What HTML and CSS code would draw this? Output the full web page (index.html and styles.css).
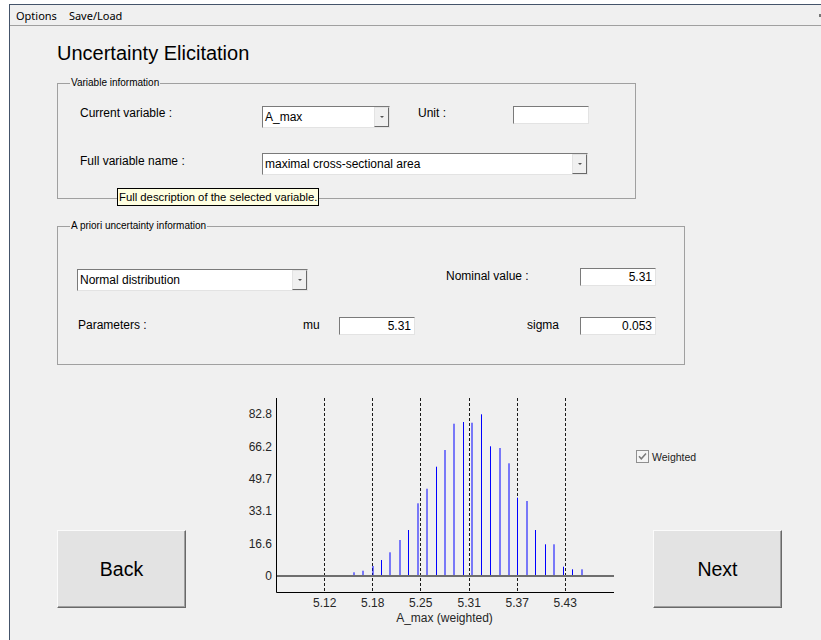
FILE: index.html
```html
<!DOCTYPE html>
<html lang="en">
<head>
<meta charset="utf-8">
<title>Uncertainty Elicitation</title>
<link rel="stylesheet" href="styles.css">
</head>
<body>
<div class="window">
  <div class="menubar">
    <span class="menu-item">Options</span>
    <span class="menu-item">Save/Load</span>
    <span class="menu-grip"></span>
  </div>

  <div class="content">
    <h1 class="title">Uncertainty Elicitation</h1>

    <fieldset class="panel panel-var">
      <legend>Variable information</legend>
      <div class="row">
        <span class="label w-182">Current variable :</span>
        <div class="combo combo-var"><span class="combo-text">A_max</span><span class="combo-btn"></span></div>
        <span class="label lbl-unit">Unit :</span>
        <div class="field field-unit"></div>
      </div>
      <div class="row row-full">
        <span class="label w-182 lbl-full">Full variable name :</span>
        <div class="combo combo-full"><span class="combo-text">maximal cross-sectional area</span><span class="combo-btn"></span></div>
      </div>
    </fieldset>

    <fieldset class="panel panel-prior">
      <legend>A priori uncertainty information</legend>
      <div class="row row-dist">
        <div class="combo combo-dist"><span class="combo-text">Normal distribution</span><span class="combo-btn"></span></div>
        <span class="label lbl-nominal">Nominal value :</span>
        <div class="field">5.31</div>
      </div>
      <div class="row row-params">
        <span class="label lbl-params">Parameters :</span>
        <span class="label lbl-mu">mu</span>
        <div class="field">5.31</div>
        <span class="label lbl-sigma">sigma</span>
        <div class="field">0.053</div>
      </div>
    </fieldset>

    <div class="lower">
      <button class="btn btn-back" type="button">Back</button>

      <svg class="plot" width="390" height="240" viewBox="0 0 390 240">
        <g stroke="#1a1a1a" stroke-width="1" stroke-dasharray="3 2">
          <line x1="88.5" y1="8" x2="88.5" y2="202"/>
          <line x1="136.5" y1="8" x2="136.5" y2="202"/>
          <line x1="184.5" y1="8" x2="184.5" y2="202"/>
          <line x1="233.5" y1="8" x2="233.5" y2="202"/>
          <line x1="281.5" y1="8" x2="281.5" y2="202"/>
          <line x1="329.5" y1="8" x2="329.5" y2="202"/>
        </g>
        <!-- weighted sample stems, drawn as 1px columns from the top down to zero -->
        <g fill="#0000ff">
          <rect x="117.5" y="182.3" width="1" height="3.7"/>
          <rect x="126.5" y="180.7" width="1" height="5.3"/>
          <rect x="136.5" y="176" width="1" height="10"/>
          <rect x="145" y="170" width="1" height="16"/>
          <rect x="153.5" y="162.3" width="1" height="23.7"/>
          <rect x="163.5" y="150" width="1" height="36"/>
          <rect x="172" y="140" width="1" height="46"/>
          <rect x="181.5" y="113.3" width="1" height="72.7"/>
          <rect x="190.5" y="98.7" width="1" height="87.3"/>
          <rect x="200" y="76.7" width="1" height="109.3"/>
          <rect x="208.5" y="60" width="1" height="126"/>
          <rect x="217.5" y="33.7" width="1" height="152.3"/>
          <rect x="227" y="32" width="1" height="154"/>
          <rect x="235.5" y="32.7" width="1" height="153.3"/>
          <rect x="245" y="24.3" width="1" height="161.7"/>
          <rect x="254" y="56.3" width="1" height="129.7"/>
          <rect x="263.5" y="58" width="1" height="128"/>
          <rect x="272.5" y="73.3" width="1" height="112.7"/>
          <rect x="281" y="107.7" width="1" height="78.3"/>
          <rect x="290.5" y="111" width="1" height="75"/>
          <rect x="299" y="140" width="1" height="46"/>
          <rect x="309" y="154.3" width="1" height="31.7"/>
          <rect x="317.5" y="154.3" width="1" height="31.7"/>
          <rect x="327" y="176.7" width="1" height="9.3"/>
          <rect x="336" y="179.3" width="1" height="6.7"/>
          <rect x="345.5" y="179.3" width="1" height="6.7"/>
        </g>
        <!-- baseline at zero -->
        <line x1="40" y1="186" x2="378" y2="186" stroke="#6e6e6e" stroke-width="2"/>
        <!-- axes -->
        <path d="M40.5 8 V202.5 H378" fill="none" stroke="#000" stroke-width="1"/>
        <g class="tick" text-anchor="end">
          <text x="36" y="28.3">82.8</text>
          <text x="36" y="61">66.2</text>
          <text x="36" y="93.3">49.7</text>
          <text x="36" y="125.3">33.1</text>
          <text x="36" y="157.6">16.6</text>
          <text x="36" y="190">0</text>
        </g>
        <g class="tick" text-anchor="middle">
          <text x="88.7" y="217.3">5.12</text>
          <text x="136.7" y="217.3">5.18</text>
          <text x="184.7" y="217.3">5.25</text>
          <text x="233.3" y="217.3">5.31</text>
          <text x="281.3" y="217.3">5.37</text>
          <text x="329.3" y="217.3">5.43</text>
          <text x="208.5" y="232.3">A_max (weighted)</text>
        </g>
      </svg>

      <div class="side">
        <label class="check">
          <svg class="check-box" width="13" height="13" viewBox="0 0 13 13">
            <rect x="0.5" y="0.5" width="12" height="12" fill="#f5f5f5" stroke="#8f8f8f"/>
            <path d="M3 6.3 L5.3 8.8 L10 3.6" fill="none" stroke="#7a7a7a" stroke-width="1.5"/>
          </svg>
          <span>Weighted</span>
        </label>
        <button class="btn btn-next" type="button">Next</button>
      </div>
    </div>
  </div>

  <div class="tooltip">Full description of the selected variable.</div>
</div>
</body>
</html>
```

FILE: styles.css
```css
html, body {
  margin: 0;
  padding: 0;
  background: #ffffff;
  overflow: hidden;
}

.window {
  position: relative;
  margin: 4px 0 0 9px;
  height: 636px;
  box-sizing: border-box;
  border-left: 1px solid #44546a;
  border-top: 1px solid #44546a;
  background: #f0f0f0;
  font-family: "Liberation Sans", Arial, sans-serif;
  color: #000;
}

/* menu bar */
.menubar {
  display: flex;
  align-items: center;
  gap: 12px;
  height: 20px;
  padding-left: 6px;
  border-bottom: 1px solid #a0a0a0;
  background: #f0f0f0;
  font-family: "Noto Sans", "Liberation Sans", sans-serif;
  font-size: 11px;
  color: #000;
}

.menu-grip {
  margin-left: auto;
  width: 2px;
  height: 3px;
  background: #777;
}

/* main area */
.content {
  padding-left: 47px;
}

.title {
  margin: 16px 0 0 0;
  font-size: 20px;
  line-height: 23px;
  font-weight: normal;
}

.panel {
  box-sizing: border-box;
  margin: 0;
  padding: 17px 0 23px 0;
  border: 1px solid #a0a0a0;
  min-width: 0;
}

.panel legend {
  margin-left: 12px;
  padding: 0 1px;
  font-size: 10px;
  line-height: 12px;
  color: #000;
}

.panel-var {
  width: 579px;
  margin-top: 12px;
}

.panel-prior {
  width: 628px;
  margin-top: 21px;
  padding: 36px 0 29px 0;
}

.row {
  display: flex;
  align-items: flex-start;
  padding-left: 22px;
}

.row-full {
  margin-top: 25px;
}

.label {
  font-size: 12px;
  line-height: 14px;
  white-space: nowrap;
}

.w-182 { width: 182px; flex: none; }
.lbl-full { margin-top: 1px; }

.lbl-unit {
  margin-left: 28px;
  width: 95px;
}

/* combo boxes */
.combo {
  box-sizing: border-box;
  display: flex;
  height: 22px;
  border: 1px solid;
  border-color: #7a7a7a #e3e3e3 #e3e3e3 #7a7a7a;
  background: #fff;
  flex: none;
}

.combo-text {
  flex: 1;
  padding-left: 2px;
  font-size: 12px;
  line-height: 20px;
  white-space: nowrap;
  overflow: hidden;
}

.combo-btn {
  box-sizing: border-box;
  width: 15px;
  height: 20px;
  display: flex;
  align-items: center;
  justify-content: center;
  background: #f0f0f0;
  border: 1px solid;
  border-color: #e3e3e3 #696969 #696969 #e3e3e3;
}

.combo-btn::after {
  content: "";
  border-left: 2px solid transparent;
  border-right: 2px solid transparent;
  border-top: 2px solid #555;
}

.combo-var { width: 128px; }
.combo-full { width: 326px; }
.combo-dist { width: 231px; margin-top: 1px; }

/* edit fields */
.field {
  box-sizing: border-box;
  width: 76px;
  height: 18px;
  padding-right: 3px;
  border: 1px solid;
  border-color: #7a7a7a #e3e3e3 #e3e3e3 #7a7a7a;
  background: #fff;
  font-size: 12px;
  line-height: 16px;
  text-align: right;
  flex: none;
}

/* a priori panel rows */
.row-dist,
.row-params {
  padding-left: 19px;
}

.row-params {
  margin-top: 26px;
}

.lbl-nominal {
  margin: 1px 0 0 138px;
  width: 134px;
}

.lbl-params {
  margin: 1px 0 0 1px;
  width: 225px;
}

.lbl-mu {
  margin-top: 1px;
  width: 36px;
}

.lbl-sigma {
  margin: 1px 0 0 112px;
  width: 53px;
}

/* lower area: buttons and plot */
.lower {
  display: flex;
  align-items: flex-start;
  margin-top: 25px;
}

.btn {
  box-sizing: border-box;
  width: 129px;
  height: 78px;
  padding: 0;
  border: 1px solid;
  border-color: #fbfbfb #696969 #696969 #fbfbfb;
  box-shadow: inset -1px -1px 0 #a0a0a0;
  background: #e3e3e3;
  font-family: "Liberation Sans", Arial, sans-serif;
  font-size: 19.5px;
  color: #000;
  flex: none;
}

.btn-back {
  margin-top: 140px;
}

.plot {
  display: block;
  margin-left: 50px;
  flex: none;
}

.plot .tick {
  font-family: "Liberation Sans", Arial, sans-serif;
  font-size: 12px;
  fill: #262626;
}

.side {
  display: flex;
  flex-direction: column;
  margin-left: 10px;
}

.check {
  display: flex;
  align-items: center;
  gap: 3px;
  margin-top: 60px;
  height: 13px;
  font-size: 10.5px;
  color: #222;
}

.check-box {
  display: block;
}

.btn-next {
  margin: 67px 0 0 17px;
}

/* hover hint */
.tooltip {
  position: absolute;
  left: 107px;
  top: 183px;
  box-sizing: border-box;
  width: 202px;
  height: 18px;
  padding-left: 1px;
  border: 1px solid #000;
  background: #ffffe1;
  font-size: 11.3px;
  line-height: 16px;
  white-space: nowrap;
}
```
